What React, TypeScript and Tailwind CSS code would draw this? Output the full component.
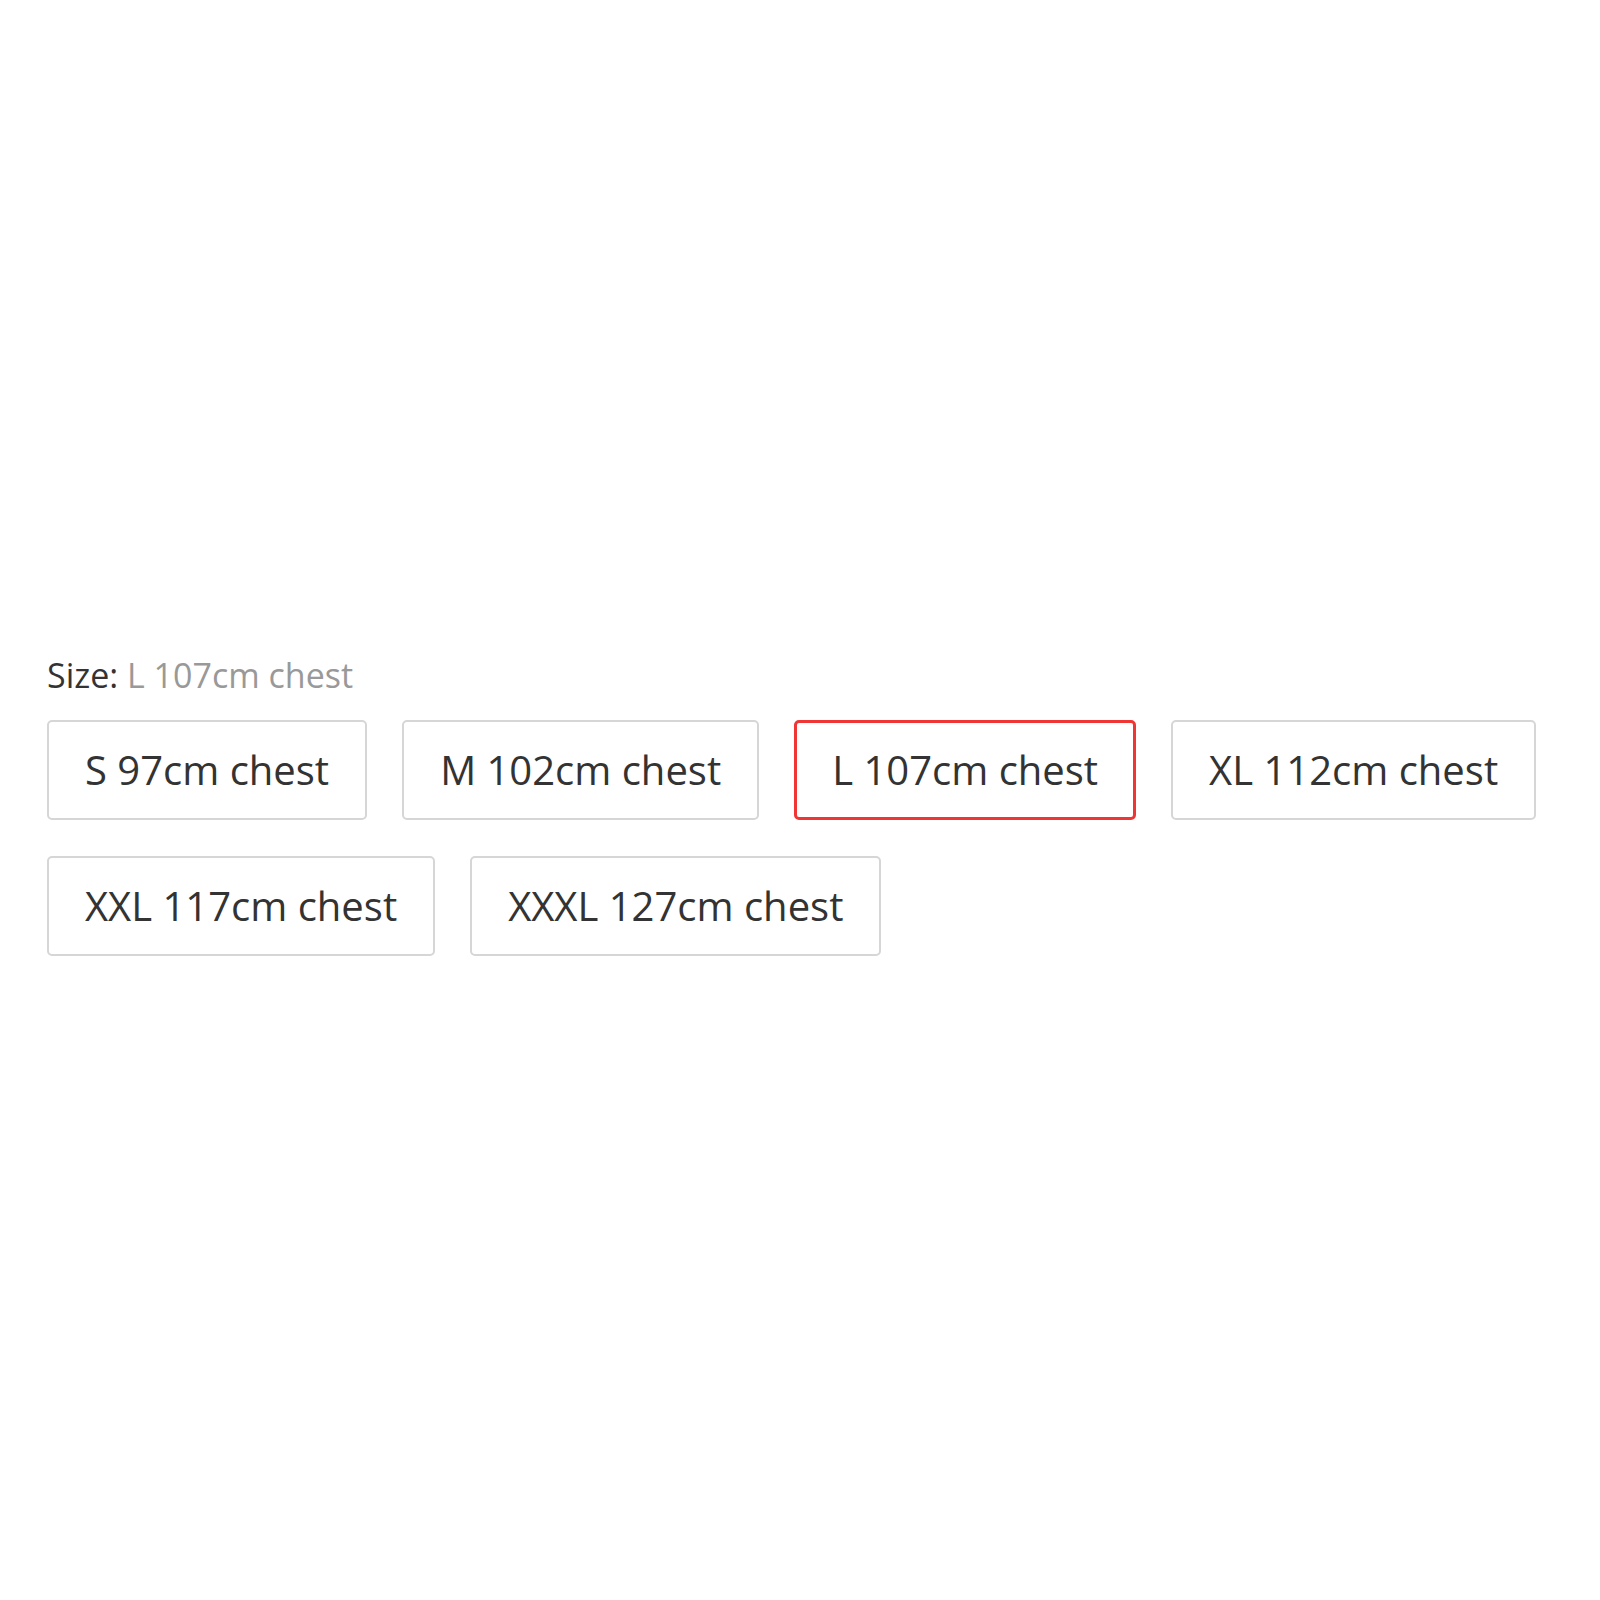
import React, { useState } from 'react';

const sizes = [
  'S 97cm chest',
  'M 102cm chest',
  'L 107cm chest',
  'XL 112cm chest',
  'XXL 117cm chest',
  'XXXL 127cm chest',
];

export default function App() {
  const [selected, setSelected] = useState('L 107cm chest');

  return (
    <div
      className="min-h-screen bg-white px-[47px] pt-[651px]"
      style={{ fontFamily: '"Open Sans", "Noto Sans", sans-serif' }}
    >
      <div className="text-[34px] leading-[48px] mb-[21px]">
        <span className="text-[#333]">Size: </span>
        <span className="text-[#999]">{selected}</span>
      </div>

      <div className="flex flex-wrap gap-x-[35px] gap-y-[36px]">
        {sizes.map((s) => (
          <button
            key={s}
            type="button"
            onClick={() => setSelected(s)}
            className={
              s === selected
                ? 'h-[100px] px-[35px] flex items-center justify-center bg-white border-[3px] border-[#f03535] rounded-[5px] text-[40px] text-[#333] cursor-pointer'
                : 'h-[100px] px-[36px] flex items-center justify-center bg-white border-2 border-[#d6d6d6] rounded-[5px] text-[40px] text-[#333] cursor-pointer'
            }
          >
            {s}
          </button>
        ))}
      </div>
    </div>
  );
}
